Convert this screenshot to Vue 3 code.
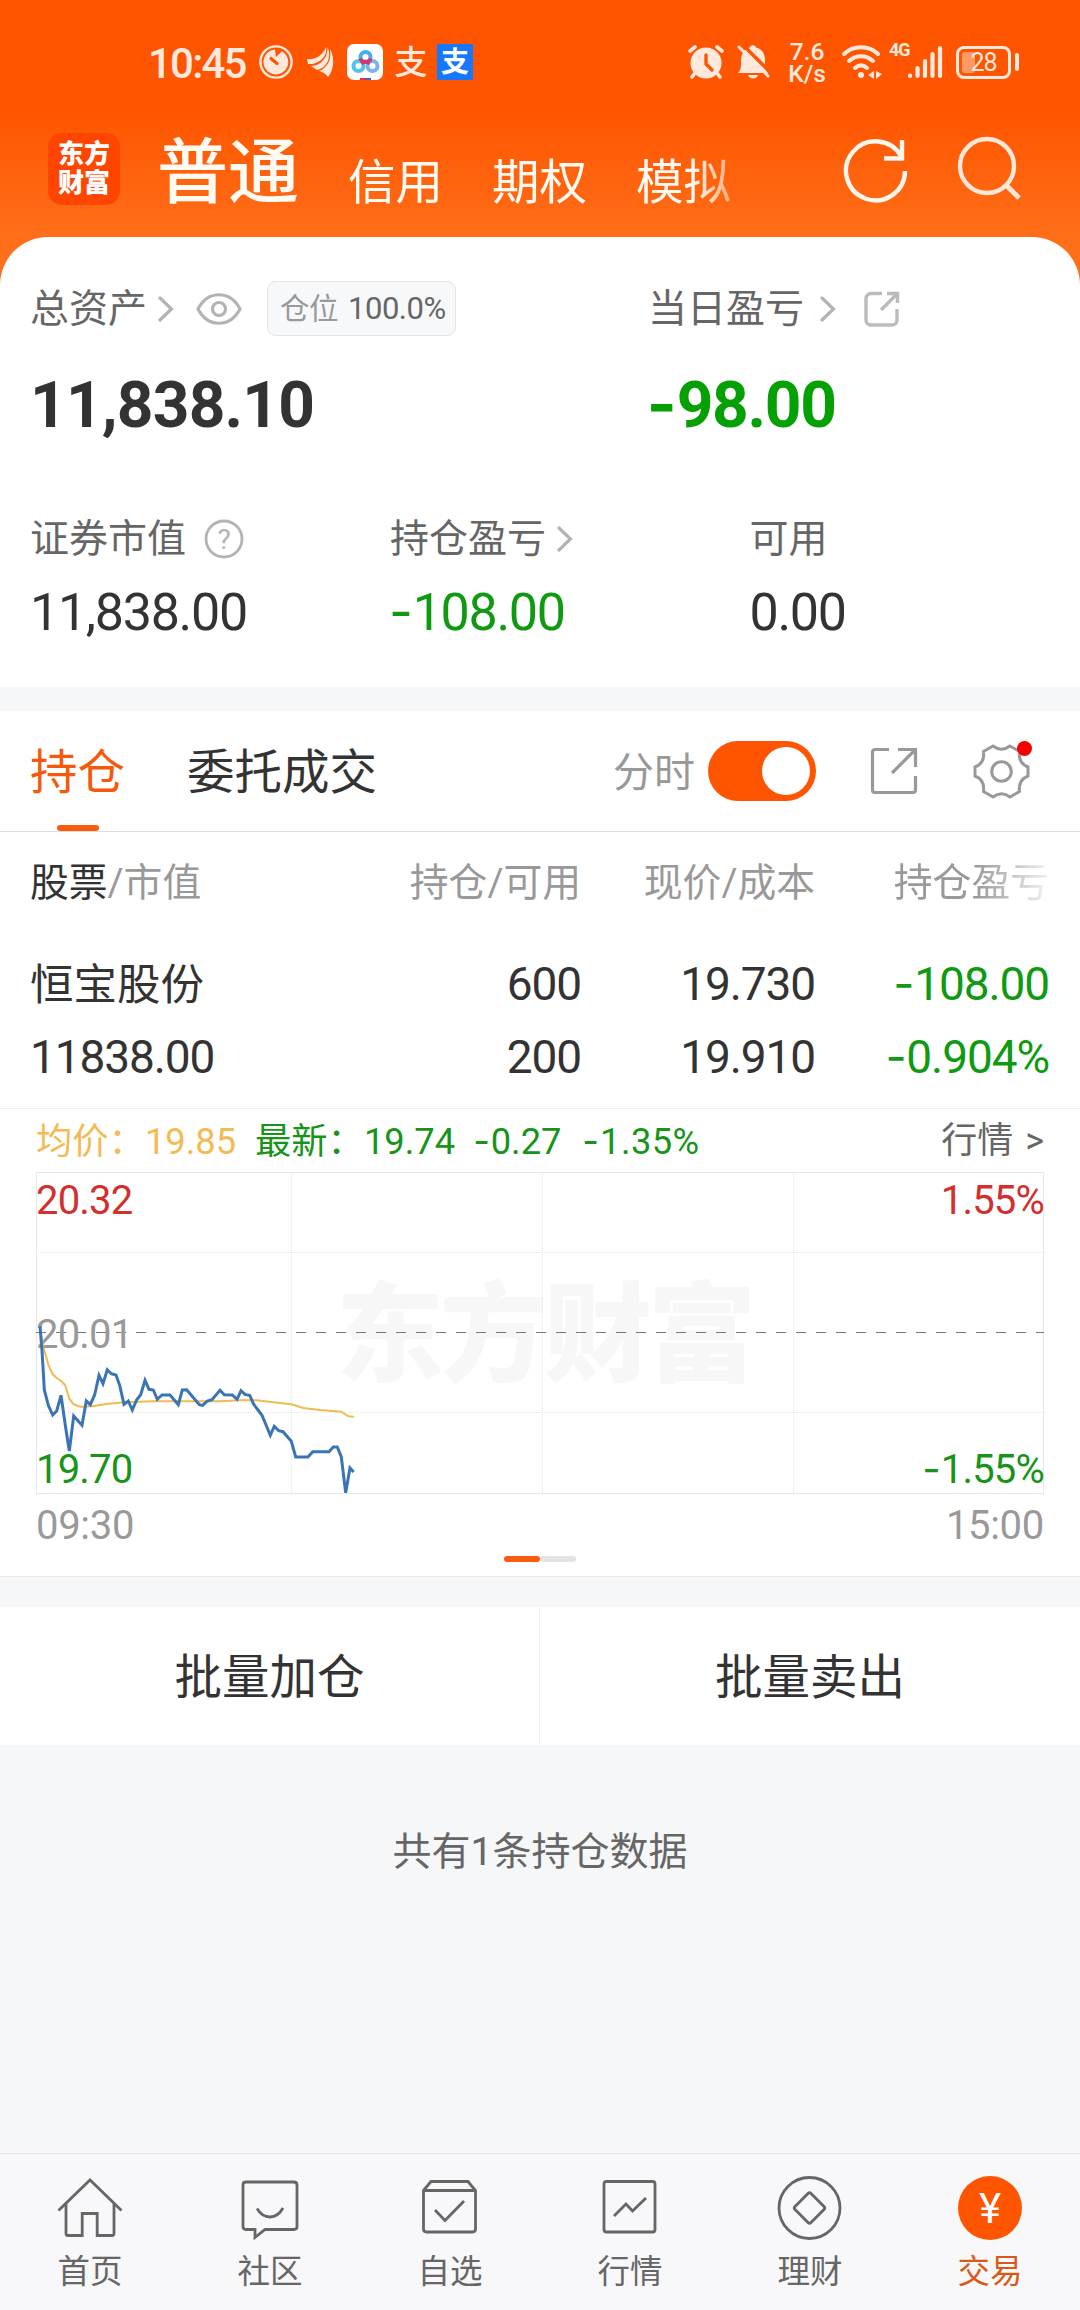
<template>
  <div class="trade-page" lang="zh-CN">
    <header class="top">
      <div class="status">
        <div class="status-left">
          <span class="clock">10:45</span>
          <svg class="ic-timer" width="36" height="36" viewBox="0 0 36 36">
            <circle cx="18" cy="18" r="15.6" fill="none" stroke="#ffe9dd" stroke-width="2.4" />
            <path d="M17 5.6A12.4 12.4 0 1 0 24 7.2L18 13Z" fill="#ffe9dd" />
            <path d="M13 14.500L19 19.500" stroke="#ff5500" stroke-width="3.200" stroke-linecap="round" />
          </svg>
          <svg class="ic-wing" width="28" height="32" viewBox="0 0 28 32" fill="#ffe9dd">
            <path d="M0 13C9 14 16 9 19 1C21 10 12 19 1 18Z" />
            <path d="M4 20C14 20 21 11 20.500 1C25 11 20 22 10 24Z" />
            <path d="M12 25C20 22 25 14 23 3C28 12 27 24 21 31C19 28 16 26 12 25Z" />
          </svg>
          <svg class="ic-disk" width="36" height="36" viewBox="0 0 36 36" fill="none" stroke-width="4">
            <rect width="36" height="36" rx="7" fill="#fff" />
            <circle cx="11.500" cy="22" r="5" stroke="#54c3ea" />
            <circle cx="25.500" cy="22" r="5" stroke="#7fb2ec" />
            <circle cx="18.500" cy="13" r="5" stroke="#46aee8" />
            <path d="M13.500 14.500C14 19 23 19 23.500 14.500M14.500 19.500L18.500 17.500L22.500 19.500" stroke="#d8336e" stroke-width="3.500" />
            <path d="M13 35H19" stroke="#e0305a" stroke-width="2" />
            <path d="M19 35H24" stroke="#2b6fd0" stroke-width="2" />
          </svg>
          <span class="ic-pay">支</span>
          <span class="ic-pay boxed">支</span>
        </div>
        <div class="status-right">
          <svg class="ic-alarm" width="36" height="34" viewBox="0 0 36 34">
            <circle cx="18" cy="18" r="15.500" fill="#ffe9dd" />
            <path d="M2 6L7 2M34 6L29 2" stroke="#ffe9dd" stroke-width="3.600" stroke-linecap="round" />
            <path d="M7 28L4 32M29 28L32 32" stroke="#ffe9dd" stroke-width="3.600" stroke-linecap="round" />
            <path d="M18 10V19L24 25" fill="none" stroke="#ff5500" stroke-width="3.400" stroke-linecap="round" />
          </svg>
          <svg class="ic-bell" width="34" height="36" viewBox="0 0 34 36">
            <path d="M1 29C4 26 4 23 4 17C4 8 9 4 13 3.500C13.500 .5 18.500 .5 19 3.500C25 5 28 9 28 17C28 23 28 26 31 29Z" fill="#ffe9dd" />
            <path d="M11 31H21C20 35.500 12 35.500 11 31Z" fill="#ffe9dd" />
            <path d="M4 -1L34 29" stroke="#ff5500" stroke-width="3.500" />
            <path d="M2 3L31 32" stroke="#ffe9dd" stroke-width="3" stroke-linecap="round" />
          </svg>
          <div class="speed">7.6<br>K/s</div>
          <svg class="ic-wifi" width="42" height="36" viewBox="0 0 42 36" fill="none" stroke="#ffe9dd" stroke-width="4" stroke-linecap="round">
            <path d="M3 10C12 1 28 1 37 10" />
            <path d="M8 17C15 10.500 25 10.500 32 17" />
            <path d="M14 24C18 20.500 22 20.500 26 24" />
            <circle cx="20" cy="31" r="3" fill="#ffe9dd" stroke="none" />
            <path d="M33 27V35L27 31ZM35 27V35L41 30Z" fill="#ffe9dd" stroke="none" />
          </svg>
          <span class="net">4G</span>
          <svg class="ic-signal" width="37" height="34" viewBox="0 0 37 34" stroke="#ffe9dd" stroke-width="4.200" stroke-linecap="round">
            <path d="M3 30.500V31M10.500 23V31M18 16V31M25.500 9V31M33 3V31" />
          </svg>
          <div class="battery">
            <span class="battery-fill" :style="{ width: battery * 0.46 + 'px' }"></span>
            <span class="battery-text">{{ battery }}</span>
          </div>
        </div>
      </div>

      <div class="nav">
        <div class="logo"><span>东方</span><span>财富</span></div>
        <nav class="accounts">
          <span
            v-for="(name, i) in accounts"
            :key="name"
            class="account"
            :class="{ active: i === 0 }"
          >{{ name }}</span>
        </nav>
        <svg class="ic-refresh" width="66" height="66" viewBox="0 0 66 66" fill="none" stroke="#fff6ee" stroke-width="4.400">
          <path d="M62 34A29.500 29.500 0 1 1 58 19" />
          <path d="M59 3V21.500H41" />
        </svg>
        <svg class="ic-search" width="66" height="66" viewBox="0 0 66 66" fill="none" stroke="#ffe8d8" stroke-width="4.400">
          <circle cx="31" cy="31" r="27" />
          <path d="M50 50L63 63" stroke-width="5" />
        </svg>
      </div>
    </header>

    <section class="summary">
      <div class="main-labels">
        <div class="cell">
          <span class="label">总资产</span>
          <svg class="chevron" width="16" height="26" viewBox="0 0 16 26"><path d="M2 2L13.500 13L2 24" /></svg>
          <svg class="ic-eye" width="46" height="32" viewBox="0 0 46 32">
            <path d="M2 16C12 -3 34 -3 44 16C34 35 12 35 2 16Z" />
            <circle cx="23" cy="16" r="6.500" />
          </svg>
          <span class="ratio"><em>仓位</em><Num value="100.0%" /></span>
        </div>
        <div class="cell">
          <span class="label">当日盈亏</span>
          <svg class="chevron far" width="16" height="26" viewBox="0 0 16 26"><path d="M2 2L13.500 13L2 24" /></svg>
          <svg class="ic-share-sm" width="36" height="36" viewBox="0 0 36 36">
            <path d="M18 2.500H7A5 5 0 0 0 2 7.500V29A5 5 0 0 0 7 34H28A5 5 0 0 0 33 29V18" />
            <path d="M17 19L33 3M23 2.500H33.500V12" />
          </svg>
        </div>
      </div>
      <div class="main-values">
        <Num value="11,838.10" />
        <Num class="down" value="-98.00" />
      </div>
      <div class="sub-labels">
        <div class="cell">
          <span class="label">证券市值</span>
          <svg class="ic-help" width="40" height="40" viewBox="0 0 40 40">
            <circle cx="20" cy="20" r="18" />
            <text x="20" y="30" text-anchor="middle">?</text>
          </svg>
        </div>
        <div class="cell">
          <span class="label">持仓盈亏</span>
          <svg class="chevron" width="16" height="26" viewBox="0 0 16 26"><path d="M2 2L13.500 13L2 24" /></svg>
        </div>
        <div class="cell"><span class="label">可用</span></div>
      </div>
      <div class="sub-values">
        <Num value="11,838.00" />
        <Num class="down" value="-108.00" />
        <Num value="0.00" />
      </div>
    </section>

    <section class="holdings">
      <div class="tabs">
        <span class="tab active">持仓</span>
        <span class="tab">委托成交</span>
        <span class="minute-label">分时</span>
        <span class="switch"><i></i></span>
        <svg class="ic-share" width="48" height="48" viewBox="0 0 48 48">
          <path d="M19 2.500H5A2.500 2.500 0 0 0 2.500 5V43A2.500 2.500 0 0 0 5 45.500H43A2.500 2.500 0 0 0 45.500 43V29" />
          <path d="M22 26L45 3M28 2.500H45.500V20" />
        </svg>
        <div class="setting">
          <svg width="57" height="57" viewBox="0 0 57 57">
            <path d="M20 3Q28.500 9.500 37 3L46.500 8.500Q45 20 55 24V33Q45 37 46.500 48.500L37 54Q28.500 47.500 20 54L10.500 48.500Q12 37 2 33V24Q12 20 10.500 8.500Z" />
            <circle cx="28.500" cy="28.500" r="9.800" />
          </svg>
          <i class="dot"></i>
        </div>
      </div>

      <div class="grid-row head">
        <span><b>股票</b>/市值</span>
        <span>持仓/可用</span>
        <span>现价/成本</span>
        <span class="fade">持仓盈亏</span>
      </div>
      <div class="rows">
        <div class="grid-row">
          <span class="stock">恒宝股份</span>
          <Num value="600" />
          <Num value="19.730" />
          <Num class="down" value="-108.00" />
        </div>
        <div class="grid-row">
          <Num value="11838.00" />
          <Num value="200" />
          <Num value="19.910" />
          <Num class="down" value="-0.904%" />
        </div>
      </div>

      <div class="quote">
        <span class="avg">均价：<Num value="19.85" /></span>
        <span class="last">最新：<Num value="19.74" /></span>
        <Num class="diff" value="-0.27" />
        <Num class="rate" value="-1.35%" />
        <span class="more">行情 &gt;</span>
      </div>
      <div class="plot">
        <span class="watermark">东方财富</span>
        <svg class="lines" width="1008" height="322" viewBox="0 0 1008 322" fill="none">
          <rect x="0.500" y="0.500" width="1007" height="321" stroke="#e8e8e8" />
          <g stroke="#e6e6e6" stroke-dasharray="1 1">
            <path d="M0 80.500H1008M0 240.500H1008" />
            <path d="M255.500 0V321M506.500 0V321M757.500 0V321" />
          </g>
          <path d="M0 160.500H1008" stroke="#777" stroke-dasharray="10 10" />
        </svg>
        <span class="axis-label top-left">20.32</span>
        <span class="axis-label mid-left">20.01</span>
        <span class="axis-label bottom-left">19.70</span>
        <span class="axis-label top-right">1.55%</span>
        <Num class="axis-label bottom-right" value="-1.55%" />
        <svg class="lines" width="1008" height="322" viewBox="0 0 1008 322" fill="none">
          <polyline :points="toPoints(average)" stroke="#f0bb50" stroke-width="2" />
          <polyline :points="toPoints(price)" stroke="#3a74b5" stroke-width="3" />
        </svg>
      </div>
      <div class="times"><span>09:30</span><span>15:00</span></div>
      <div class="pager"><i class="on"></i><i></i></div>
    </section>

    <section class="batch">
      <span>批量加仓</span>
      <span>批量卖出</span>
    </section>
    <p class="note">共有1条持仓数据</p>

    <footer class="tabbar">
      <div class="item">
        <svg width="66" height="66" viewBox="0 0 66 66">
          <path d="M1.500 35.500L33 5L64.500 35.500" />
          <path d="M9 28.500V58.500Q9 60.500 11 60.500H25.200V38.500H40.200V60.500H55Q57 60.500 57 58.500V28.500" />
        </svg>
        <span>首页</span>
      </div>
      <div class="item">
        <svg width="66" height="66" viewBox="0 0 66 66">
          <path d="M9 7H57Q60 7 60 10V51.500Q60 54.500 57 54.500H28L18 62.500V54.500H9Q6 54.500 6 51.500V10Q6 7 9 7Z" />
          <path d="M20 33.500Q25 42 33 42Q41 42 46 33" />
        </svg>
        <span>社区</span>
      </div>
      <div class="item">
        <svg width="66" height="66" viewBox="0 0 66 66">
          <path d="M6.500 15.500L14 6.500H51L58.500 15.500V54Q58.500 57 55.500 57H9.500Q6.500 57 6.500 54ZM6.500 15.500H58.500" />
          <path d="M18 35L28 45.500L47 26" />
        </svg>
        <span>自选</span>
      </div>
      <div class="item">
        <svg width="66" height="66" viewBox="0 0 66 66">
          <rect x="7" y="6.500" width="51" height="50.500" rx="2.500" />
          <path d="M17 41L29 29L35.500 36L49 23" />
        </svg>
        <span>行情</span>
      </div>
      <div class="item">
        <svg width="66" height="66" viewBox="0 0 66 66">
          <circle cx="32.500" cy="33" r="30.500" />
          <path d="M31 18.500Q32.500 17 34 18.500L47 31.500Q48.500 33 47 34.500L34 47.500Q32.500 49 31 47.500L18 34.500Q16.500 33 18 31.500Z" />
        </svg>
        <span>理财</span>
      </div>
      <div class="item current">
        <span class="yen">¥</span>
        <span>交易</span>
      </div>
    </footer>
  </div>
</template>

<script setup>
import { h } from 'vue'

const battery = 28
const accounts = ['普通', '信用', '期权', '模拟']

// the minus sign is set wider than the digits' own hyphen
const Num = ({ value }) => {
  const negative = value.startsWith('-')
  return h('span', { class: 'num' }, [
    negative ? h('span', { class: 'num-sign' }, '-') : null,
    negative ? value.slice(1) : value
  ])
}
Num.props = ['value']

// sampled on a 3x grid, shifted to the plot's corner when drawn
const price = [
  [60, 648], [66, 720], [73, 838], [85, 885], [98, 914], [110, 902], [123, 855], [136, 945],
  [148, 1022], [161, 917], [186, 945], [199, 872], [211, 883], [224, 853], [237, 795], [249, 820],
  [262, 778], [274, 790], [288, 794], [299, 825], [312, 882], [325, 872], [337, 899], [350, 868],
  [362, 853], [375, 810], [387, 837], [400, 839], [412, 867], [426, 854], [450, 854], [475, 883],
  [487, 839], [500, 838], [538, 883], [548, 885], [562, 872], [576, 868], [600, 840], [613, 853],
  [637, 854], [651, 867], [663, 841], [676, 853], [689, 855], [701, 882], [726, 915], [751, 975],
  [763, 948], [776, 961], [789, 964], [814, 993], [827, 1040], [864, 1040], [878, 1024], [927, 1024],
  [940, 1010], [952, 1010], [964, 1040], [977, 1147], [990, 1073], [1001, 1085]
]
const average = [
  [60, 660], [70, 710], [85, 762], [98, 792], [110, 803], [123, 812], [136, 825], [148, 865],
  [161, 882], [180, 889], [215, 888], [260, 881], [312, 876], [400, 873], [500, 873], [600, 873],
  [660, 870], [710, 870], [760, 876], [814, 882], [850, 893], [900, 899], [964, 904], [985, 918],
  [1001, 919]
]
const toPoints = (list) =>
  list.map(([x, y]) => `${((x - 48) / 3).toFixed(1)},${((y - 185) / 3).toFixed(1)}`).join(' ')
</script>

<style>
body {
  margin: 0;
  background: #f7f8fa;
}
.num {
  white-space: nowrap;
}
.num-sign {
  margin-left: -0.02em;
  margin-right: 0.02em;
  font-family: Inter, sans-serif;
  line-height: 0;
}
</style>

<style scoped>
.trade-page {
  width: 1080px;
  height: 2310px;
  display: flex;
  flex-direction: column;
  overflow: hidden;
  background: #f6f7f9;
  color: #333;
  font-family: Roboto, "Noto Sans CJK SC", sans-serif;
}
svg {
  display: block;
  flex: none;
}

/* header */
.top {
  height: 285px;
  flex: none;
  background: linear-gradient(#ff5500 0, #ff5500 110px, #ff6f1a 240px, #ff6f1a 100%);
}
.status {
  height: 124px;
  display: flex;
  align-items: center;
  justify-content: space-between;
  padding: 0 61px 0 148px;
  color: #ffe9dd;
}
.status-left,
.status-right {
  display: flex;
  align-items: center;
}
.clock {
  width: 110px;
  font-size: 42px;
  font-weight: 500;
  letter-spacing: -1.8px;
  line-height: 60px;
  padding-top: 3px;
}
.ic-wing {
  margin-left: 13px;
}
.ic-disk {
  margin-left: 12px;
}
.ic-pay {
  width: 36px;
  height: 36px;
  margin-left: 10px;
  font-size: 33px;
  font-weight: 500;
  line-height: 37px;
  text-align: center;
}
.ic-pay.boxed {
  margin-left: 8px;
  background: #1677ff;
  color: #fff;
  font-size: 28px;
  font-weight: 700;
}
.ic-alarm {
  margin-right: 1px;
}
.ic-bell {
  margin-left: 12px;
}
.speed {
  width: 44px;
  margin-left: 14px;
  padding-top: 2px;
  text-align: center;
  font-size: 24.500px;
  font-weight: 500;
  line-height: 22px;
}
.ic-wifi {
  margin-left: 12px;
}
.net {
  margin: -26px 0 0 6px;
  width: 20px;
  font-size: 18px;
  font-weight: 700;
  letter-spacing: -1px;
}
.ic-signal {
  margin-left: -2px;
}
.battery {
  position: relative;
  width: 49px;
  height: 27px;
  margin-left: 12px;
  border: 3px solid #ffe9dd;
  border-radius: 8px;
  margin-right: 8px;
}
.battery::after {
  content: "";
  position: absolute;
  right: -11px;
  top: 4px;
  width: 4px;
  height: 18px;
  border-radius: 2px;
  background: #ffe9dd;
}
.battery-fill {
  position: absolute;
  left: 3px;
  top: 3px;
  height: 21px;
  border-radius: 3px;
  background: #ff9966;
}
.battery-text {
  position: absolute;
  inset: 0;
  text-align: center;
  font-size: 25px;
  line-height: 28px;
  letter-spacing: -1px;
}
.nav {
  height: 113px;
  display: flex;
  padding-left: 48px;
}
.logo {
  width: 72px;
  height: 72px;
  margin-top: 9px;
  border-radius: 14px;
  background: #ff4500;
  color: #fff;
  display: flex;
  flex-direction: column;
  align-items: center;
  justify-content: center;
  font-size: 26px;
  font-weight: 900;
  line-height: 29px;
}
.accounts {
  width: 620px;
  height: 113px;
  margin-left: 37px;
  display: flex;
  align-items: flex-start;
  gap: 49px;
  color: #fffaf2;
  -webkit-mask-image: linear-gradient(90deg, #000 535px, transparent 610px);
  mask-image: linear-gradient(90deg, #000 535px, transparent 610px);
}
.account {
  font-size: 47.500px;
  line-height: 118px;
}
.account.active {
  font-size: 71px;
  font-weight: 500;
  line-height: 97px;
}
.ic-refresh {
  margin: 13px 0 0 66px;
}
.ic-search {
  margin: 11px 0 0 47px;
}

/* assets */
.summary {
  height: 450px;
  flex: none;
  box-sizing: border-box;
  margin-top: -48px;
  padding: 44px 30px 0;
  border-radius: 48px 48px 0 0;
  background: #fff;
}
.cell {
  display: flex;
  align-items: center;
}
.label {
  font-size: 39px;
  line-height: 40px;
  color: #666;
}
.chevron {
  margin-left: 11px;
  fill: none;
  stroke: #b3b3b3;
  stroke-width: 3.200;
  stroke-linecap: round;
}
.chevron.far {
  margin-left: 16px;
}
.main-labels {
  height: 55px;
  display: grid;
  grid-template-columns: 618px 1fr;
}
.ic-eye {
  margin-left: 22px;
  fill: none;
  stroke: #b3b3b3;
  stroke-width: 3.200;
}
.ratio {
  box-sizing: border-box;
  width: 189px;
  height: 55px;
  margin-left: 25px;
  padding-left: 12px;
  border: 1px solid #e3e4e6;
  border-radius: 9px;
  background: #f7f8fa;
  display: flex;
  align-items: center;
  gap: 10px;
  font-size: 31px;
  line-height: 32px;
  letter-spacing: -0.500px;
  color: #666;
}
.ratio em {
  font-style: normal;
  font-size: 29.500px;
  color: #999;
}
.ic-share-sm {
  margin-left: 28px;
  fill: none;
  stroke: #bbb;
  stroke-width: 3.400;
}
.main-values {
  margin-top: 32px;
  display: grid;
  grid-template-columns: 618px 1fr;
  font-size: 64px;
  font-weight: 700;
  line-height: 76px;
  letter-spacing: -0.800px;
}
.down {
  color: #109a12;
}
.main-values .down {
  color: #04a004;
  letter-spacing: -1.300px;
}
.sub-labels,
.sub-values {
  display: grid;
  grid-template-columns: 360px 359.500px 1fr;
}
.sub-labels {
  height: 50px;
  margin-top: 70px;
}
.ic-help {
  margin-left: 18px;
  fill: none;
  stroke: #b3b3b3;
  stroke-width: 2.800;
}
.ic-help text {
  fill: #b3b3b3;
  stroke: none;
  font-size: 28px;
}
.sub-values {
  margin-top: 19px;
  font-size: 52px;
  line-height: 60px;
  letter-spacing: -1.300px;
}

/* holdings */
.holdings {
  flex: none;
  margin-top: 24px;
  height: 865px;
  background: #fff;
  border-bottom: 1px solid #ebebeb;
}
.tabs {
  height: 120px;
  display: flex;
  align-items: center;
  padding: 0 50px 0 30px;
  border-bottom: 1px solid #dedede;
}
.tab {
  position: relative;
  height: 120px;
  font-size: 47.500px;
  line-height: 125px;
  margin-right: 62px;
}
.tab.active {
  color: #f55a0c;
}
.tab.active::after {
  content: "";
  position: absolute;
  left: 50%;
  bottom: 0;
  width: 42px;
  height: 6px;
  margin-left: -21px;
  border-radius: 3px;
  background: #f95c0e;
}
.minute-label {
  margin-left: auto;
  font-size: 41px;
  line-height: 44px;
  padding-top: 4px;
  color: #999;
}
.switch {
  width: 108px;
  height: 60px;
  margin-left: 13px;
  border-radius: 30px;
  background: #ff5500;
  display: flex;
  align-items: center;
  justify-content: flex-end;
}
.switch i {
  width: 48px;
  height: 48px;
  margin-right: 6px;
  border-radius: 50%;
  background: #fff;
}
.ic-share {
  margin-left: 54px;
  fill: none;
  stroke: #999;
  stroke-width: 3.200;
}
.setting {
  position: relative;
  margin-left: 55px;
  fill: none;
  stroke: #999;
  stroke-width: 3;
}
.dot {
  position: absolute;
  right: -2px;
  top: -2px;
  width: 15px;
  height: 15px;
  border-radius: 50%;
  background: #f50000;
}
.grid-row {
  display: grid;
  grid-template-columns: 250px 301px 234px 234px;
  padding: 0 30px;
  text-align: right;
  font-size: 46px;
  line-height: 73px;
  letter-spacing: -1.100px;
}
.grid-row > :first-child {
  text-align: left;
}
.grid-row.head {
  height: 100px;
  font-size: 38.800px;
  line-height: 102px;
  letter-spacing: 0;
  color: #999;
}
.head b {
  font-weight: 400;
  color: #333;
}
.fade {
  -webkit-mask-image: linear-gradient(90deg, #000 160px, transparent 245px);
  mask-image: linear-gradient(90deg, #000 160px, transparent 245px);
}
.rows {
  box-sizing: border-box;
  height: 177px;
  padding-top: 16px;
  border-bottom: 1px solid #eee;
}
.stock {
  height: 72px;
  font-size: 43.500px;
  line-height: 76px;
  letter-spacing: 0;
}
.quote {
  height: 63px;
  display: flex;
  align-items: center;
  padding: 0 36px;
  font-size: 36.300px;
  line-height: 65px;
  color: #18941a;
}
.quote > span {
  padding-top: 2px;
  white-space: pre;
}
.avg {
  width: 219px;
  color: #f3bb55;
}
.last {
  width: 219px;
}
.diff {
  width: 109px;
}
.rate {
  letter-spacing: 0.400px;
}
.more {
  margin-left: auto;
  color: #666;
  font-size: 36px;
  word-spacing: 3px;
}
.plot {
  position: relative;
  height: 322px;
  margin: 0 36px;
}
.lines {
  position: absolute;
  left: 0;
  top: 0;
}
.watermark {
  position: absolute;
  left: 300px;
  top: 84px;
  font-size: 108px;
  font-weight: 900;
  line-height: 160px;
  letter-spacing: -4px;
  color: #f7f7f7;
}
.axis-label {
  position: absolute;
  font-size: 40px;
  line-height: 48px;
  letter-spacing: -0.800px;
  color: #999;
}
.top-left,
.mid-left,
.bottom-left {
  left: 0;
}
.top-right,
.bottom-right {
  right: 0;
}
.top-left,
.top-right {
  top: 5px;
  color: #d22f2f;
}
.mid-left {
  top: 139px;
}
.bottom-left,
.bottom-right {
  top: 274px;
  color: #18941a;
}
.times {
  height: 62px;
  display: flex;
  justify-content: space-between;
  padding: 0 36px;
  font-size: 40px;
  line-height: 63px;
  letter-spacing: -0.300px;
  color: #999;
}
.pager {
  display: flex;
  justify-content: center;
}
.pager i {
  width: 36px;
  height: 6px;
  border-radius: 3px;
  background: #e4e4e4;
}
.pager .on {
  background: #f95c0e;
}

/* bottom */
.batch {
  flex: none;
  height: 138px;
  margin-top: 30px;
  display: grid;
  grid-template-columns: 539px 541px;
  background: #fff;
}
.batch span {
  height: 138px;
  text-align: center;
  font-size: 47.500px;
  line-height: 143px;
}
.batch span + span {
  border-left: 1px solid #f0f0f0;
}
.note {
  margin: 77px 0 0;
  text-align: center;
  font-size: 39px;
  line-height: 60px;
  color: #666;
}
.tabbar {
  height: 156px;
  margin-top: auto;
  display: flex;
  border-top: 1px solid #e2e3e6;
  background: #f8f8fa;
}
.item {
  flex: 1;
  display: flex;
  flex-direction: column;
  align-items: center;
  padding-top: 21px;
  font-size: 32.500px;
  line-height: 62px;
  color: #666;
}
.item svg {
  fill: none;
  stroke: #666;
  stroke-width: 2.800;
}
.item.current {
  color: #d85a18;
}
.yen {
  width: 64px;
  height: 64px;
  margin: 1px;
  border-radius: 50%;
  background: #ff5500;
  color: #fff;
  text-align: center;
  font-size: 42px;
  line-height: 66px;
}
</style>
